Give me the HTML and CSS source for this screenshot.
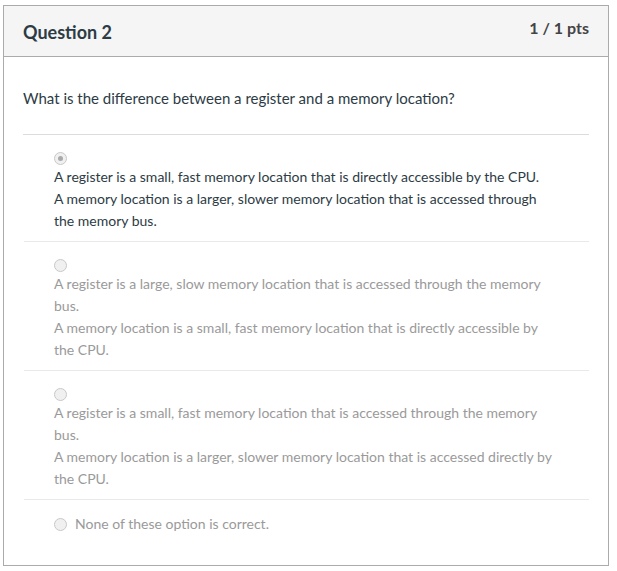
FILE: index.html
```html
<!DOCTYPE html>
<html>
<head>
<meta charset="utf-8">
<link rel="stylesheet" href="styles.css">
</head>
<body>
<div class="card">
  <div class="header">
    <div class="title">Question 2</div>
    <div class="pts">1 / 1 pts</div>
  </div>
  <div class="body">
    <p class="question">What is the difference between a register and a memory location?</p>
    <div class="answers">
      <div class="answer selected">
        <span class="radio checked"></span>
        <div class="text">A register is a small, fast memory location that is directly accessible by the CPU.<br>A memory location is a larger, slower memory location that is accessed through the memory bus.</div>
      </div>
      <div class="answer">
        <span class="radio"></span>
        <div class="text">A register is a large, slow memory location that is accessed through the memory bus.<br>A memory location is a small, fast memory location that is directly accessible by the CPU.</div>
      </div>
      <div class="answer">
        <span class="radio"></span>
        <div class="text">A register is a small, fast memory location that is accessed through the memory bus.<br>A memory location is a larger, slower memory location that is accessed directly by the CPU.</div>
      </div>
      <div class="answer inline">
        <span class="radio"></span>
        <div class="text">None of these option is correct.</div>
      </div>
    </div>
  </div>
</div>
</body>
</html>
```
FILE: styles.css
```css
html, body {
  margin: 0;
  padding: 0;
  background: #fff;
}
body {
  font-family: Lato, "Open Sans", sans-serif;
  color: #2d3b45;
}
.card {
  margin: 5px 0 0 3px;
  width: 606px;
  height: 561px;
  box-sizing: border-box;
  border: 1px solid #ababab;
}
.header {
  height: 51px;
  box-sizing: border-box;
  background: #f5f5f5;
  border-bottom: 1px solid #ababab;
  display: flex;
  justify-content: space-between;
  align-items: flex-start;
  padding: 0 19px 0 19px;
}
.title {
  font-size: 18px;
  font-weight: bold;
  margin-top: 14px;
  line-height: 24px;
}
.pts {
  font-size: 16px;
  font-weight: bold;
  margin-top: 11px;
  line-height: 22px;
  color: #444;
}
.body {
  padding: 0 19px 0 17px;
}
.question {
  font-size: 15px;
  line-height: 22px;
  margin: 30px 0 0 2px;
  height: 47px;
  border-bottom: 1px solid #dcdcdc;
}
.answers {
  margin-left: 3px;
}
.answer {
  padding: 17px 30px 9px 30px;
  border-bottom: 1px solid #e9e9e9;
  font-size: 14px;
  line-height: 22px;
  color: #9a9a9a;
}
.answer.selected {
  color: #2d3b45;
}
.answer.inline {
  display: flex;
  align-items: center;
  gap: 8px;
  border-bottom: none;
  padding-top: 13px;
}
.radio {
  display: block;
  width: 13px;
  height: 13px;
  box-sizing: border-box;
  border-radius: 50%;
  border: 1px solid #c8c8c8;
  background: #f0f0f0;
  position: relative;
  margin-bottom: 1px;
}
.inline .radio {
  margin-bottom: 0;
}
.radio.checked::after {
  content: "";
  position: absolute;
  left: 3px;
  top: 3px;
  width: 5px;
  height: 5px;
  border-radius: 50%;
  background: #a9a9a9;
}
.text {
  margin: 0;
}
```
